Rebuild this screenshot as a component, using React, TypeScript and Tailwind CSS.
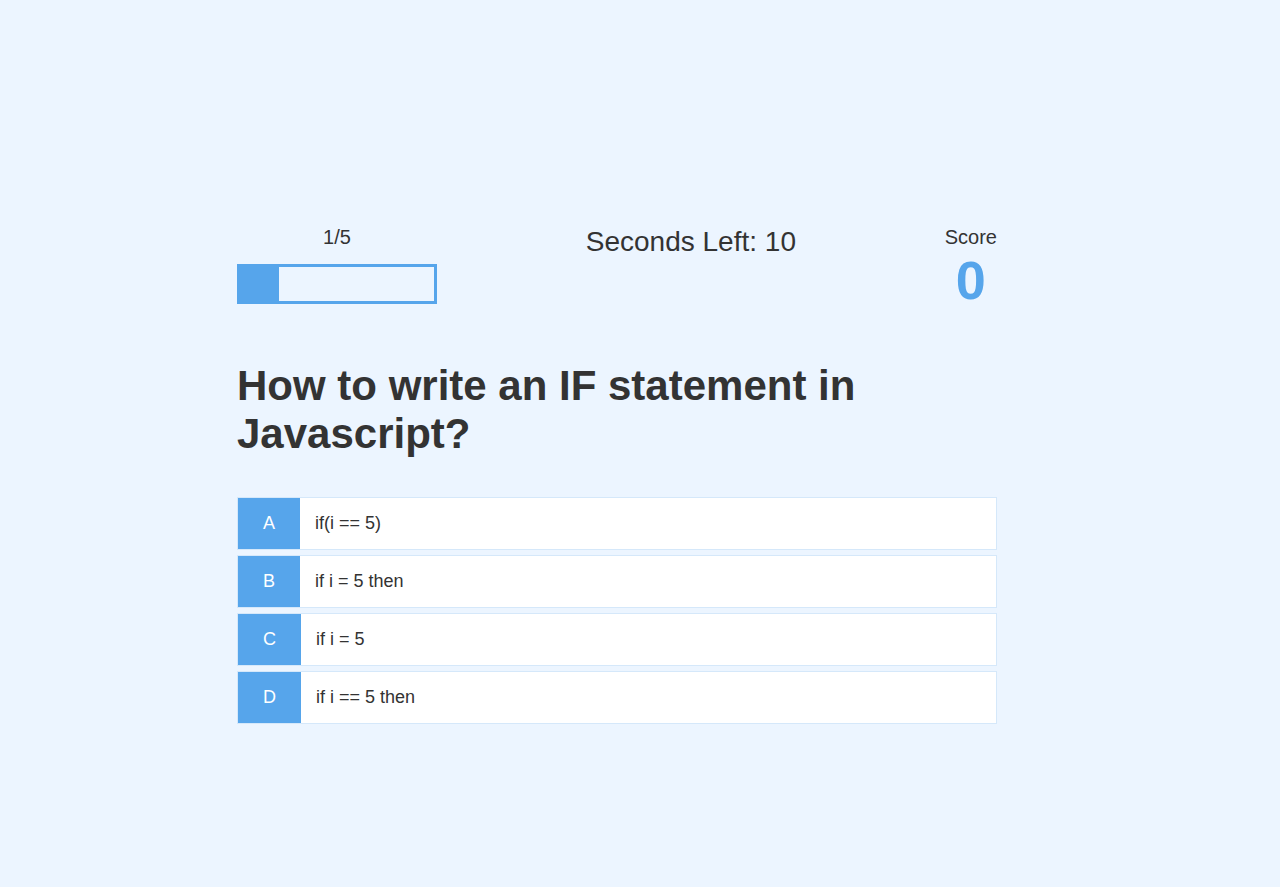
import React from "react";

const choices = [
  { p: "A", t: "if(i == 5)" },
  { p: "B", t: "if i = 5 then" },
  { p: "C", t: "if i = 5" },
  { p: "D", t: "if i == 5 then" },
];

export default function App() {
  return (
    <div
      className="min-h-[887px] w-full bg-[#ecf5ff] text-[#333333]"
      style={{ fontFamily: '"Liberation Sans", Arial, sans-serif' }}
    >
      <div className="ml-[237px] w-[760px] pt-[226px]">
        <div className="flex justify-between">
          <div className="flex flex-col">
            <p className="text-center text-[20px] leading-[23px]">1/5</p>
            <div className="mt-[15px] h-[40px] w-[200px] border-[3px] border-[#56a5eb]">
              <div className="h-full w-[20%] bg-[#56a5eb]" />
            </div>
          </div>
          <div>
            <p className="text-center text-[28px] leading-[32px]">Seconds Left: 10</p>
          </div>
          <div className="flex flex-col items-center">
            <p className="text-center text-[20px] leading-[23px]">Score</p>
            <p className="text-center text-[54px] font-bold leading-[62px] text-[#56a5eb]">0</p>
          </div>
        </div>
        <h2 className="mt-[51px] mb-[39px] text-[42px] font-bold leading-[48px]">
          How to write an IF statement in Javascript?
        </h2>
        <div className="flex flex-col">
          {choices.map((c) => (
            <div
              key={c.p}
              className="mb-[5px] flex w-full border border-[rgba(86,165,235,0.25)] bg-white text-[18px] leading-[21px]"
            >
              <p className="bg-[#56a5eb] px-[25px] py-[15px] text-white">{c.p}</p>
              <p className="w-full p-[15px]">{c.t}</p>
            </div>
          ))}
        </div>
      </div>
    </div>
  );
}
